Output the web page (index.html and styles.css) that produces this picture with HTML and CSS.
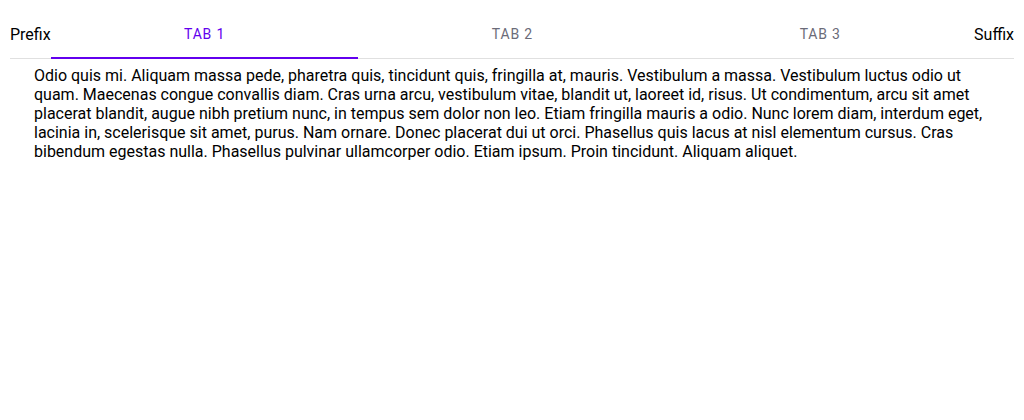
FILE: index.html
```html
<!DOCTYPE html>
<html>
<head>
<meta charset="utf-8">
<link rel="stylesheet" href="styles.css">
</head>
<body>
<div class="tabs">
  <div class="tabbar">
    <div class="prefix">Prefix</div>
    <div class="tab active">Tab 1</div>
    <div class="tab">Tab 2</div>
    <div class="tab">Tab 3</div>
    <div class="suffix">Suffix</div>
  </div>
  <div class="content">Odio quis mi. Aliquam massa pede, pharetra quis, tincidunt quis, fringilla at, mauris. Vestibulum a massa. Vestibulum luctus odio ut quam. Maecenas congue convallis diam. Cras urna arcu, vestibulum vitae, blandit ut, laoreet id, risus. Ut condimentum, arcu sit amet placerat blandit, augue nibh pretium nunc, in tempus sem dolor non leo. Etiam fringilla mauris a odio. Nunc lorem diam, interdum eget, lacinia in, scelerisque sit amet, purus. Nam ornare. Donec placerat dui ut orci. Phasellus quis lacus at nisl elementum cursus. Cras bibendum egestas nulla. Phasellus pulvinar ullamcorper odio. Etiam ipsum. Proin tincidunt. Aliquam aliquet.</div>
</div>
</body>
</html>
```

FILE: styles.css
```css
html, body {
  margin: 0;
  padding: 0;
  background: #fff;
}
body {
  padding: 10px;
  font-family: Roboto, "Liberation Sans", sans-serif;
  color: #000;
}
.tabbar {
  display: flex;
  align-items: center;
  height: 48px;
  border-bottom: 1px solid #e0e0e0;
}
.prefix, .suffix {
  font-size: 16px;
  line-height: 20px;
  padding-top: 2px;
}
.tab {
  flex: 1;
  height: 100%;
  display: flex;
  align-items: center;
  justify-content: center;
  text-transform: uppercase;
  font-size: 14px;
  font-weight: 400;
  letter-spacing: 0.8px;
  color: #6b6b78;
  box-sizing: border-box;
  border-bottom: 2px solid transparent;
  margin-bottom: -1px;
}
.tab.active {
  color: #6200ee;
  border-bottom-color: #6200ee;
}
.content {
  padding: 7px 24px 8px;
  font-size: 16px;
  line-height: normal;
}
```
